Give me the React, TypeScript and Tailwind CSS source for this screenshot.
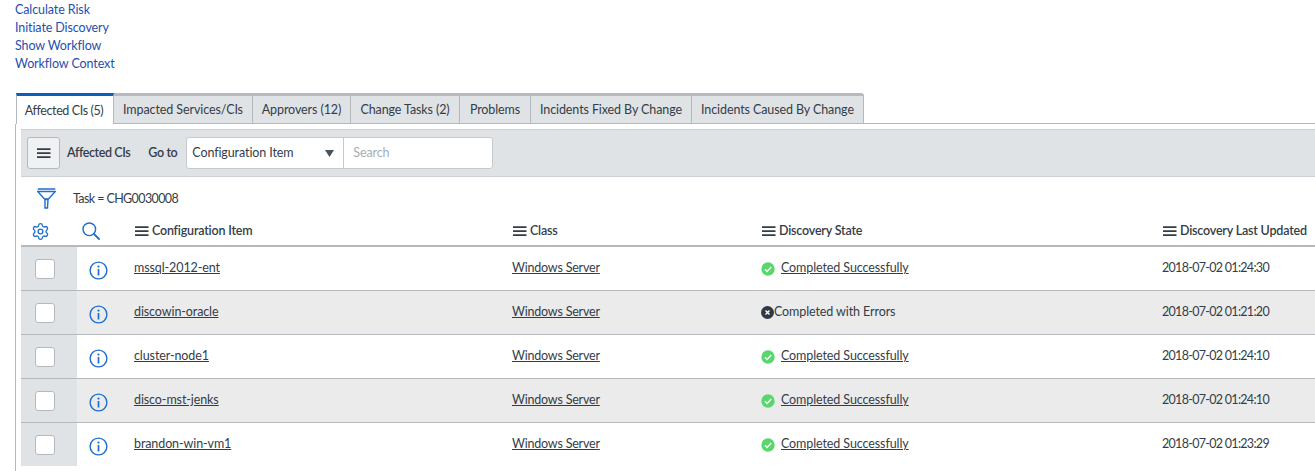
import { Settings } from "lucide-react"

const font = "font-['Lato','Liberation_Sans',sans-serif]"

const links = ["Calculate Risk", "Initiate Discovery", "Show Workflow", "Workflow Context"]

const tabs = [
  { label: "Impacted Services/CIs", w: "w-[139px]" },
  { label: "Approvers (12)", w: "w-[98px]" },
  { label: "Change Tasks (2)", w: "w-[109px]" },
  { label: "Problems", w: "w-[71px]" },
  { label: "Incidents Fixed By Change", w: "w-[161px]" },
  { label: "Incidents Caused By Change", w: "w-[172px]" },
]

const rows = [
  { ci: "mssql-2012-ent", ok: true, updated: "2018-07-02 01:24:30" },
  { ci: "discowin-oracle", ok: false, updated: "2018-07-02 01:21:20" },
  { ci: "cluster-node1", ok: true, updated: "2018-07-02 01:24:10" },
  { ci: "disco-mst-jenks", ok: true, updated: "2018-07-02 01:24:10" },
  { ci: "brandon-win-vm1", ok: true, updated: "2018-07-02 01:23:29" },
]

const cols = "grid grid-cols-[56px_57px_378px_249px_401px_1fr]"

function Bars({ className = "" }: { className?: string }) {
  return (
    <svg width="14" height="11" viewBox="0 0 14 11" className={className}>
      <path d="M0 1.2h13.5M0 5.2h13.5M0 9.2h13.5" stroke="#343d47" strokeWidth="1.7" />
    </svg>
  )
}

function Info() {
  return (
    <svg width="19" height="19" viewBox="0 0 19 19">
      <circle cx="9.5" cy="9.5" r="8.4" fill="none" stroke="#1f6fd0" strokeWidth="1.4" />
      <circle cx="9.5" cy="5.6" r="1.1" fill="#1f6fd0" />
      <path d="M9.5 8v6.5" stroke="#1f6fd0" strokeWidth="1.7" />
    </svg>
  )
}

function Search() {
  return (
    <svg width="18" height="18" viewBox="0 0 18 18" fill="none" stroke="#1f6fd0">
      <circle cx="7.3" cy="7.3" r="6.3" strokeWidth="1.4" />
      <path d="M12 12l5 5" strokeWidth="1.8" strokeLinecap="round" />
    </svg>
  )
}

function Funnel() {
  return (
    <svg width="19" height="21" viewBox="0 0 19 21" fill="none" stroke="#1f6fd0" strokeWidth="1.4">
      <path d="M.7 1h17.600M.7 3.500h17.600L11.500 11H7.500L.7 3.500z" />
      <path d="M7.500 11.500h4M8 11.500V20h2.500l.5-8.500" />
    </svg>
  )
}

function StatusOk() {
  return (
    <svg width="14" height="14" viewBox="0 0 14 14">
      <circle cx="7" cy="7" r="6.7" fill="#59d66c" />
      <path d="M3.800 7.200l2.300 2.300 4.200-4.400" fill="none" stroke="#fff" strokeWidth="1.5" />
    </svg>
  )
}

function StatusErr() {
  return (
    <svg width="13" height="13" viewBox="0 0 13 13">
      <circle cx="6.500" cy="6.500" r="6.500" fill="#2f3843" />
      <path d="M4.500 4.500l4 4M8.500 4.500l-4 4" stroke="#fff" strokeWidth="1.4" />
    </svg>
  )
}

function HeadCell({ label }: { label: string }) {
  return (
    <div className="flex items-center gap-[3px] pl-[1px] font-semibold tracking-[-0.2px] whitespace-nowrap">
      <Bars />
      {label}
    </div>
  )
}

export default function App() {
  return (
    <div className={`h-[471px] w-[1315px] overflow-hidden bg-white text-[12.5px] tracking-[-0.1px] text-[#343d47] ${font}`}>
      {/* Related links */}
      <ul className="pl-[15px] pt-[1px] leading-[18px] text-[#1f4fae]">
        {links.map((l) => (
          <li key={l}>{l}</li>
        ))}
      </ul>

      {/* Tabs */}
      <div className="mt-[20px] flex h-[31px] pl-[16px]">
        <div className="flex w-[98px] items-center justify-center border-t-[3px] border-r border-l border-t-[#0e5cc0] border-r-[#b5b9be] border-l-[#b5b9be] bg-white pt-[2px] pr-[2px] tracking-[-0.4px]">
          Affected CIs (5)
        </div>
        <div className="flex rounded-tr-[3px] border-t-[3px] border-t-[#b6b9bd]">
          {tabs.map((t) => (
            <div
              key={t.label}
              className={`flex ${t.w} items-center justify-center border-r border-b border-[#b5b9be] bg-[#e0e3e6] pt-[2px] whitespace-nowrap`}
            >
              {t.label}
            </div>
          ))}
        </div>
        <div className="flex-1 border-b border-[#b5b9be]" />
      </div>

      {/* Related list */}
      <div className="ml-[15px] h-[350px] border-l border-[#b5b9be] pt-[5px] pl-[5px]">
        <div className="flex h-[48px] items-center border-y border-[#cdd0d4] bg-[#e0e3e6] pl-[6px]">
          <button className="flex h-[32px] w-[33px] items-center justify-center rounded-[3px] border border-[#b5b9be] bg-[#f0f1f3]">
            <Bars />
          </button>
          <span className="ml-[7px] font-semibold tracking-[-0.4px]">Affected CIs</span>
          <span className="ml-[18px] font-semibold tracking-[-0.4px]">Go to</span>
          <div className="ml-[9px] flex h-[32px] w-[307px] rounded-[3px] border border-[#c6cacf] bg-white">
            <div className="flex w-[157px] items-center justify-between border-r border-[#c6cacf] pr-[9px] pl-[5px]">
              <span>Configuration Item</span>
              <svg width="9" height="7" viewBox="0 0 9 7">
                <path d="M0 0h9L4.500 7z" fill="#4a525b" />
              </svg>
            </div>
            <div className="flex items-center pl-[9px] text-[#a9adb2]">Search</div>
          </div>
        </div>

        <div className="flex h-[42px] items-center pl-[16px]">
          <Funnel />
          <span className="ml-[17px] pt-[3px] tracking-[-0.6px]">Task = CHG0030008</span>
        </div>

        <div className={`${cols} h-[28px] items-center border-b-2 border-[#b5b9be] pb-[2px]`}>
          <div className="pl-[10px]">
            <Settings size={19} color="#1f6fd0" strokeWidth={1.7} />
          </div>
          <div className="pl-[5px]">
            <Search />
          </div>
          <HeadCell label="Configuration Item" />
          <HeadCell label="Class" />
          <HeadCell label="Discovery State" />
          <HeadCell label="Discovery Last Updated" />
        </div>

        {rows.map((r, i) => (
          <div
            key={r.ci}
            className={`${cols} h-[44px] items-center border-b border-[#b5b9be] last:h-[43px] last:border-b-0 ${i % 2 ? "bg-[#ebebeb]" : "bg-white"}`}
          >
            <div className="flex h-full items-center bg-[#e0e3e6] pl-[14px]">
              <div className="h-[20px] w-[20px] rounded-[3px] border border-[#b5b9be] bg-white" />
            </div>
            <div className="flex pt-[4px] pl-[12px]">
              <Info />
            </div>
            <div className="underline">{r.ci}</div>
            <div className="tracking-[-0.2px] underline">Windows Server</div>
            {r.ok ? (
              <div className="flex items-center gap-[6px]">
                <StatusOk />
                <span className="underline">Completed Successfully</span>
              </div>
            ) : (
              <div className="flex items-center">
                <StatusErr />
                <span>Completed with Errors</span>
              </div>
            )}
            <div className="tracking-[-0.7px]">{r.updated}</div>
          </div>
        ))}
      </div>
    </div>
  )
}
